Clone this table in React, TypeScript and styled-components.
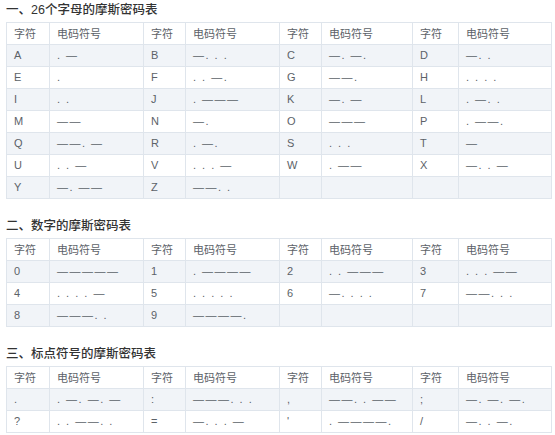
import React from "react";
import styled, {createGlobalStyle} from "styled-components";

const GlobalStyle = createGlobalStyle`
  html, body {
    margin: 0;
    padding: 0;
    background: #ffffff;
    overflow: hidden;
  }
  body {
    font-family: "Liberation Sans", "Noto Sans CJK SC", sans-serif;
  }
`

const Page = styled.div`
  display: flex;
  flex-direction: column;
  padding: 1px 0 0 6px;
`

const Section = styled.section<{$first?: boolean}>`
  display: flex;
  flex-direction: column;
  margin-top: ${p => (p.$first ? 0 : 18)}px;
`

const Title = styled.h3`
  margin: 0 0 3px;
  font-size: 12.5px;
  line-height: 18px;
  font-weight: 500;
  color: #333333;
  font-family: "Liberation Sans", "Noto Sans CJK SC", sans-serif;
`

const Table = styled.table`
  width: 545px;
  border-collapse: collapse;
  table-layout: fixed;
  border: 1px solid #dfe5ec;
`

const Row = styled.tr`
  background: #ffffff;
  tbody &:nth-child(odd) {
    background: #f1f4f8;
  }
`

const Cell = styled.td<{$code?: boolean}>`
  height: 21px;
  padding: 0 7px;
  border: 1px solid #dfe5ec;
  font-size: 11px;
  line-height: 21px;
  color: #5c6268;
  white-space: nowrap;
  overflow: hidden;
  letter-spacing: ${p => (p.$code ? "1.5px" : "0")};
`

const HeadCell = styled.th`
  height: 21px;
  padding: 0 7px;
  border: 1px solid #dfe5ec;
  font-size: 11px;
  line-height: 21px;
  font-weight: normal;
  text-align: left;
  color: #5c6268;
  font-family: "Noto Sans CJK SC", sans-serif;
`

const widths = [43, 94, 42, 94, 42, 91, 46, 93]

type Pair = [string, string]

const letters: Pair[] = [
  ["A", ". —"], ["B", "—. . ."], ["C", "—. —."], ["D", "—. ."],
  ["E", "."], ["F", ". . —."], ["G", "——."], ["H", ". . . ."],
  ["I", ". ."], ["J", ". ———"], ["K", "—. —"], ["L", ". —. ."],
  ["M", "——"], ["N", "—."], ["O", "———"], ["P", ". ——."],
  ["Q", "——. —"], ["R", ". —."], ["S", ". . ."], ["T", "—"],
  ["U", ". . —"], ["V", ". . . —"], ["W", ". ——"], ["X", "—. . —"],
  ["Y", "—. ——"], ["Z", "——. ."], ["", ""], ["", ""],
]

const digits: Pair[] = [
  ["0", "—————"], ["1", ". ————"], ["2", ". . ———"], ["3", ". . . ——"],
  ["4", ". . . . —"], ["5", ". . . . ."], ["6", "—. . . ."], ["7", "——. . ."],
  ["8", "———. ."], ["9", "————."], ["", ""], ["", ""],
]

const punct: Pair[] = [
  [".", ". —. —. —"], [":", "———. . ."], [",", "——. . ——"], [";", "—. —. —."],
  ["?", ". . ——. ."], ["=", "—. . . —"], ["'", ". ————."], ["/", "—. . —."],
]

function chunk(list: Pair[]): Pair[][] {
  const rows: Pair[][] = []
  for (let i = 0; i < list.length; i += 4) rows.push(list.slice(i, i + 4))
  return rows
}

function MorseTable({data}: {data: Pair[]}) {
  return (
    <Table>
      <colgroup>
        {widths.map((w, i) => <col key={i} style={{width: w}} />)}
      </colgroup>
      <thead>
        <Row>
          {[0, 1, 2, 3].map(i => (
            <React.Fragment key={i}>
              <HeadCell>字符</HeadCell>
              <HeadCell>电码符号</HeadCell>
            </React.Fragment>
          ))}
        </Row>
      </thead>
      <tbody>
        {chunk(data).map((row, r) => (
          <Row key={r}>
            {row.map(([ch, code], i) => (
              <React.Fragment key={i}>
                <Cell>{ch}</Cell>
                <Cell $code>{code}</Cell>
              </React.Fragment>
            ))}
          </Row>
        ))}
      </tbody>
    </Table>
  )
}

export default function App() {
  return (
    <>
      <GlobalStyle />
      <Page>
        <Section $first>
          <Title>一、26个字母的摩斯密码表</Title>
          <MorseTable data={letters} />
        </Section>
        <Section>
          <Title>二、数字的摩斯密码表</Title>
          <MorseTable data={digits} />
        </Section>
        <Section>
          <Title>三、标点符号的摩斯密码表</Title>
          <MorseTable data={punct} />
        </Section>
      </Page>
    </>
  )
}
